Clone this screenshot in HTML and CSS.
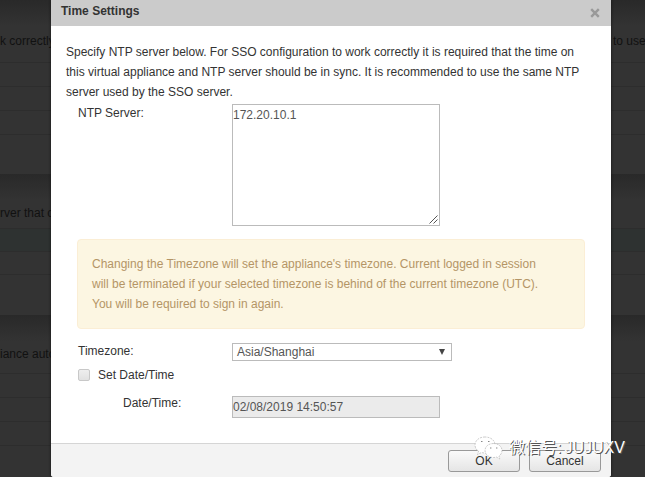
FILE: index.html
```html
<!DOCTYPE html>
<html lang="en">
<head>
<meta charset="utf-8">
<title>Time Settings</title>
<link rel="stylesheet" href="styles.css">
</head>
<body>
<div class="page">
  <section class="panel panel-first">
    <p class="panel-text"><span>k correctly</span><span class="panel-end">to use</span></p>
    <div class="row"></div><div class="row"></div><div class="row"></div><div class="row"></div>
  </section>
  <section class="panel panel-second">
    <p class="panel-text"><span>rver that c</span></p>
    <div class="row selected"></div><div class="row"></div><div class="row"></div>
  </section>
  <section class="panel panel-third">
    <p class="panel-text"><span>iance auto</span></p>
    <div class="row"></div><div class="row"></div><div class="row"></div><div class="row"></div>
  </section>
</div>

<div class="dialog" role="dialog">
  <header class="dialog-header">
    <h1>Time Settings</h1>
    <svg class="close" viewBox="0 0 10 10"><path d="M1.2 1.2 8.8 8.8M8.8 1.2 1.2 8.8"/></svg>
  </header>
  <div class="dialog-body">
    <p class="intro">Specify NTP server below. For SSO configuration to work correctly it is required that the time on<br>this virtual appliance and NTP server should be in sync. It is recommended to use the same NTP<br>server used by the SSO server.</p>
    <div class="field ntp">
      <label>NTP Server:</label>
      <div class="textarea"><span>172.20.10.1</span>
        <svg class="grip" viewBox="0 0 9 9"><path d="M.5 8.5 8.5 .5M4.5 8.5 8.5 4.5"/></svg>
      </div>
    </div>
    <div class="warning">Changing the Timezone will set the appliance's timezone. Current logged in session<br>will be terminated if your selected timezone is behind of the current timezone (UTC).<br>You will be required to sign in again.</div>
    <div class="field timezone">
      <label>Timezone:</label>
      <div class="select"><span>Asia/Shanghai</span><svg class="arrow" viewBox="0 0 6 6"><path d="M0 0H6L3 6Z"/></svg></div>
    </div>
    <div class="check-row"><span class="checkbox"></span><label>Set Date/Time</label></div>
    <div class="field datetime">
      <label>Date/Time:</label>
      <div class="input">02/08/2019 14:50:57</div>
    </div>
  </div>
  <footer class="dialog-footer">
    <div class="button">OK</div>
    <div class="button">Cancel</div>
  </footer>
</div>

<div class="watermark">
  <svg class="bubbles" viewBox="0 0 30 24">
    <path class="bubble" d="M11 1C5 1 1 4.600 1 9c0 2.600 1.300 4.700 3.500 6.200L3.500 18.500l4-2c1.200.4 2.300.5 3.500.5 6 0 10-3.500 10-8S17 1 11 1Z"/>
    <path class="bubble" d="M19.500 7.500c-5 0-8.500 3-8.500 7s3.500 7 8.500 7c1 0 2-.1 3-.4l3.300 1.900-.8-2.900c1.900-1.300 3-3.300 3-5.600 0-4-3.500-7-8.500-7Z"/>
    <path class="eyes" d="M7 5.500h1.500M14 5.500h1.500M16 12h1.400M22 12h1.400"/>
  </svg>
  <span class="wm-cjk">微信号:</span><span class="wm-name">JUJUXV</span>
</div>
</body>
</html>
```

FILE: styles.css
```css
* { box-sizing: border-box; }
body {
  margin: 0;
  width: 645px;
  height: 477px;
  overflow: hidden;
  position: relative;
  background: #333;
  color: #333;
  font: 12px/20px "Liberation Sans", Arial, sans-serif;
}
p, h1 { margin: 0; }

.page { height: 477px; overflow: hidden; color: #111; }
.panel { background: linear-gradient(#292929, #333 26px); }
.panel-first { height: 174px; padding-top: 31px; }
.panel-second { height: 141px; padding-top: 29px; }
.panel-third { height: 162px; padding-top: 29px; }
.panel-text { display: flex; justify-content: space-between; white-space: nowrap; }
.panel-first .panel-text { height: 31px; }
.panel-second .panel-text { height: 25px; }
.panel-third .panel-text { height: 29px; }
.panel-end { width: 32px; }
.row { height: 24px; border-top: 1px solid #2d2d2d; }
.panel-second .row { height: 23px; }
.row.selected { background: #2e3231; }

.dialog {
  position: absolute;
  left: 51px;
  top: 0;
  width: 560px;
  height: 477px;
  display: flex;
  flex-direction: column;
  background: #fff;
  border-radius: 0 0 3px 3px;
  box-shadow: 0 0 3px #111;
  overflow: hidden;
}
.dialog-header {
  height: 26px;
  padding: 1px 11px 0 10px;
  display: flex;
  justify-content: space-between;
  background: #cbcbcb;
}
.dialog-header h1 { font-size: 12px; line-height: 20px; }
.close { width: 10px; height: 10px; margin-top: 7px; fill: none; stroke: #999; stroke-width: 2.4; }
.dialog-body { height: 417px; padding: 16px 15px 0; }
.intro { height: 62px; white-space: nowrap; }
.field { display: flex; padding-left: 12px; }
.field label { width: 154px; }
.textarea {
  width: 208px;
  height: 122px;
  padding: 0 1px 1px 0;
  display: flex;
  justify-content: space-between;
  border: 1px solid #bbb;
  color: #555;
}
.ntp { height: 135px; }
.ntp label { margin-top: -1px; }
.grip { width: 9px; height: 9px; align-self: flex-end; fill: none; stroke: #555; stroke-width: 1; }
.warning {
  width: 508px;
  height: 90px;
  margin-left: 11px;
  padding: 14px;
  border: 1px solid #fbeed5;
  border-radius: 4px;
  background: #fcf6e2;
  color: #b49566;
  white-space: nowrap;
}
.timezone { margin-top: 12px; height: 24px; }
.select {
  width: 220px;
  height: 18px;
  margin-top: 2px;
  padding: 0 6px 0 4px;
  display: flex;
  align-items: center;
  justify-content: space-between;
  border: 1px solid #bbb;
  color: #555;
}
.arrow { width: 6px; height: 6px; fill: #444; }
.check-row { height: 31px; padding-left: 12px; display: flex; gap: 8px; }
.checkbox {
  width: 12px;
  height: 12px;
  margin-top: 4px;
  border: 1px solid #c8c8c8;
  border-radius: 2px;
  background: linear-gradient(#eee, #e1e1e1);
}
.datetime label { width: 109px; margin-top: -3px; }
.datetime { padding-left: 57px; }
.input {
  width: 208px;
  height: 22px;
  border: 1px solid #bbb;
  background: #ebebeb;
  color: #555;
}
.dialog-footer {
  flex: 1;
  padding: 6px 10px 0;
  display: flex;
  justify-content: flex-end;
  gap: 9px;
  border-top: 1px solid #d5d5d5;
  background: #f3f3f3;
}
.button {
  width: 72px;
  height: 22px;
  border: 1px solid #999;
  border-radius: 3px;
  background: linear-gradient(#fafafa, #e5e5e5);
  text-align: center;
}
.watermark {
  position: absolute;
  left: 474px;
  top: 436px;
  display: flex;
  color: #fff;
  font: 16px/24px "Liberation Sans", "Noto Sans CJK SC", sans-serif;
  text-shadow: 1px 1px 0 #555;
  white-space: nowrap;
}
.bubbles { width: 30px; height: 24px; margin-right: 5px; }
.bubble { fill: #fff; stroke: #aaa; stroke-width: .6; stroke-dasharray: 2 1; }
.eyes { stroke: #888; stroke-width: 1.2; }
.wm-name { margin-left: 3px; }
```
